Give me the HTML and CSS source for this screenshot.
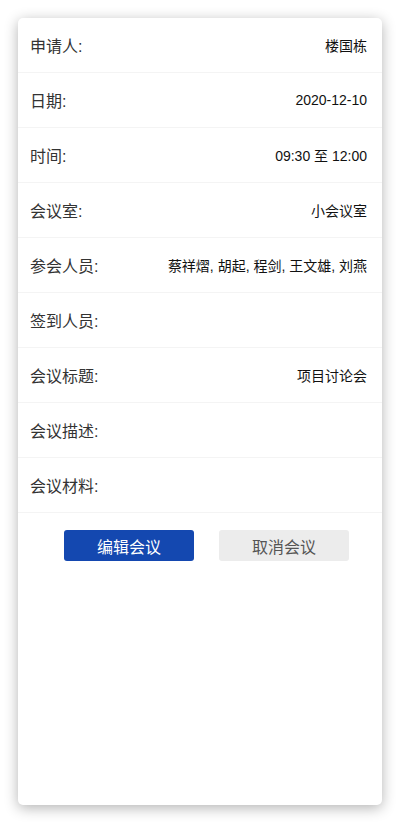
FILE: index.html
```html
<!DOCTYPE html>
<html lang="zh">
<head>
  <meta charset="UTF-8">
  <meta name="viewport" content="width=device-width, initial-scale=1">
  <title>会议详情</title>
  <link rel="stylesheet" href="styles.css">
</head>
<body>

  <div class="card">
    <div class="row"><span class="label">申请人:</span><span class="value">楼国栋</span></div>
    <div class="row"><span class="label">日期:</span><span class="value">2020-12-10</span></div>
    <div class="row"><span class="label">时间:</span><span class="value">09:30 至 12:00</span></div>
    <div class="row"><span class="label">会议室:</span><span class="value">小会议室</span></div>
    <div class="row"><span class="label">参会人员:</span><span class="value">蔡祥熠, 胡起, 程剑, 王文雄, 刘燕</span></div>
    <div class="row"><span class="label">签到人员:</span><span class="value"></span></div>
    <div class="row"><span class="label">会议标题:</span><span class="value">项目讨论会</span></div>
    <div class="row"><span class="label">会议描述:</span><span class="value"></span></div>
    <div class="row"><span class="label">会议材料:</span><span class="value"></span></div>

    <div class="actions">
      <button class="btn btn-primary">编辑会议</button>
      <button class="btn btn-cancel">取消会议</button>
    </div>
  </div>

</body>
</html>
```

FILE: styles.css
```css
* {
  margin: 0;
  padding: 0;
  box-sizing: border-box;
}
body {
  background: #fff;
  font-family: "Liberation Sans", "Noto Sans CJK SC", sans-serif;
  padding: 18px;
}
.card {
  background: #fff;
  border-radius: 5px;
  box-shadow: 0 3px 14px rgba(0, 0, 0, 0.3);
  height: 787px;
}
.row {
  display: flex;
  justify-content: space-between;
  align-items: center;
  height: 55px;
  padding: 0 15px 0 12px;
  border-bottom: 1px solid #f4f4f4;
}
.label {
  font-size: 16px;
  color: #333;
}
.value {
  font-size: 14px;
  color: #111;
}
.actions {
  display: flex;
  gap: 25px;
  padding: 17px 0 0 46px;
}
.btn {
  width: 130px;
  height: 31px;
  border: none;
  border-radius: 3px;
  font-family: inherit;
  font-size: 16px;
}
.btn-primary {
  background: #1448b0;
  color: #fff;
}
.btn-cancel {
  background: #ececec;
  color: #555;
}
```
